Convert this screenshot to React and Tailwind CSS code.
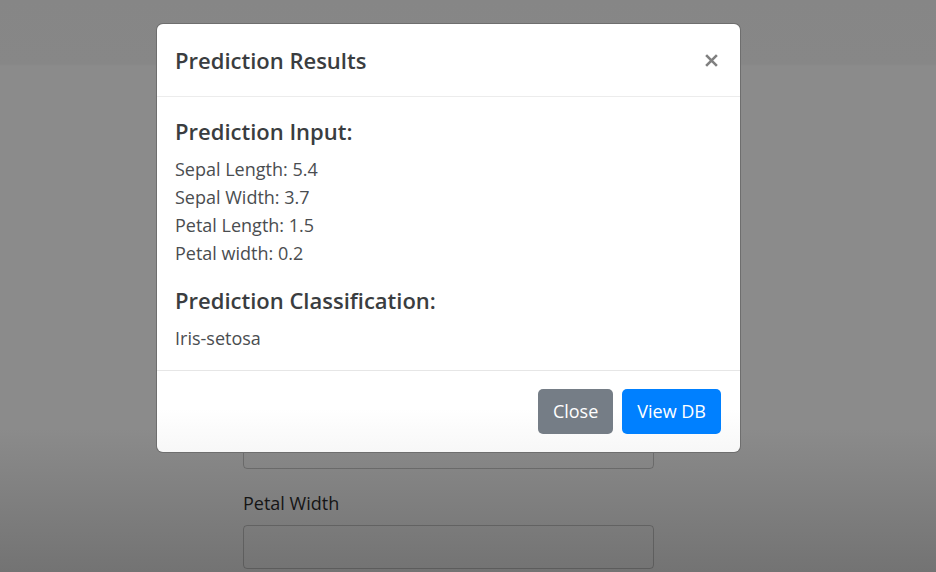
const measurements = [
  'Sepal Length: 5.4',
  'Sepal Width: 3.7',
  'Petal Length: 1.5',
  'Petal width: 0.2',
];

function Field({ id, children, ...rest }) {
  return (
    <div className="flex flex-col">
      {children}
      <input
        id={id}
        type="text"
        className="h-11 rounded border border-black/20 bg-transparent px-4 outline-none"
        {...rest}
      />
    </div>
  );
}

function PredictionForm() {
  return (
    <form className="mx-auto flex w-[411px] flex-col gap-5 pt-[425px]">
      <Field id="petal-length" aria-label="Petal Length" />
      <Field id="petal-width">
        <label htmlFor="petal-width" className="mb-2 leading-7 text-[#151515]">
          Petal Width
        </label>
      </Field>
    </form>
  );
}

function Section({ title, children }) {
  return (
    <section>
      <h5 className="mb-2 text-[22px] leading-8 font-semibold text-[#3a3d40]">{title}</h5>
      {children}
    </section>
  );
}

function ResultsDialog() {
  return (
    <div
      role="dialog"
      aria-labelledby="results-title"
      className="w-full max-w-[583px] rounded-md bg-linear-to-b from-white from-90% to-[#f7f7f7] shadow-[0_0_0_1px_#6e6e6e]"
    >
      <header className="flex h-[73px] items-center justify-between border-b border-[#ececec] px-[18px]">
        <h5 id="results-title" className="text-[22px] leading-8 font-semibold text-[#3a3d40]">
          Prediction Results
        </h5>
        <button type="button" aria-label="Close dialog" className="p-1 text-[#808080]">
          <svg viewBox="0 0 14 14" className="size-[13px]" fill="none" stroke="currentColor" strokeWidth="2.8">
            <path d="M1.2 1.2 12.8 12.8M12.8 1.2 1.2 12.8" />
          </svg>
        </button>
      </header>
      <div className="flex flex-col gap-[17px] p-[18px] leading-7 text-[#4a4d50]">
        <Section title="Prediction Input:">
          {measurements.map((line) => (
            <p key={line}>{line}</p>
          ))}
        </Section>
        <Section title="Prediction Classification:">
          <p>Iris-setosa</p>
        </Section>
      </div>
      <footer className="flex justify-end gap-[9px] border-t border-[#e6e6e6] px-[19px] py-[18px]">
        <button type="button" className="h-[45px] rounded-[5px] bg-[#757d86] px-[15px] text-white">
          Close
        </button>
        <button type="button" className="h-[45px] rounded-[5px] bg-[#0080ff] px-[15px] text-white">
          View DB
        </button>
      </footer>
    </div>
  );
}

export default function App() {
  return (
    <div className="relative h-screen overflow-hidden bg-[linear-gradient(to_bottom,#868686_0,#878787_64px,#8b8b8b_66px,#8b8b8b_75%,#737373_100%)] pr-[39px] font-['Open_Sans','Noto_Sans',sans-serif] text-[18px]">
      <PredictionForm />
      <div className="absolute inset-0 flex items-start justify-center pt-6 pr-[39px]">
        <ResultsDialog />
      </div>
    </div>
  );
}
